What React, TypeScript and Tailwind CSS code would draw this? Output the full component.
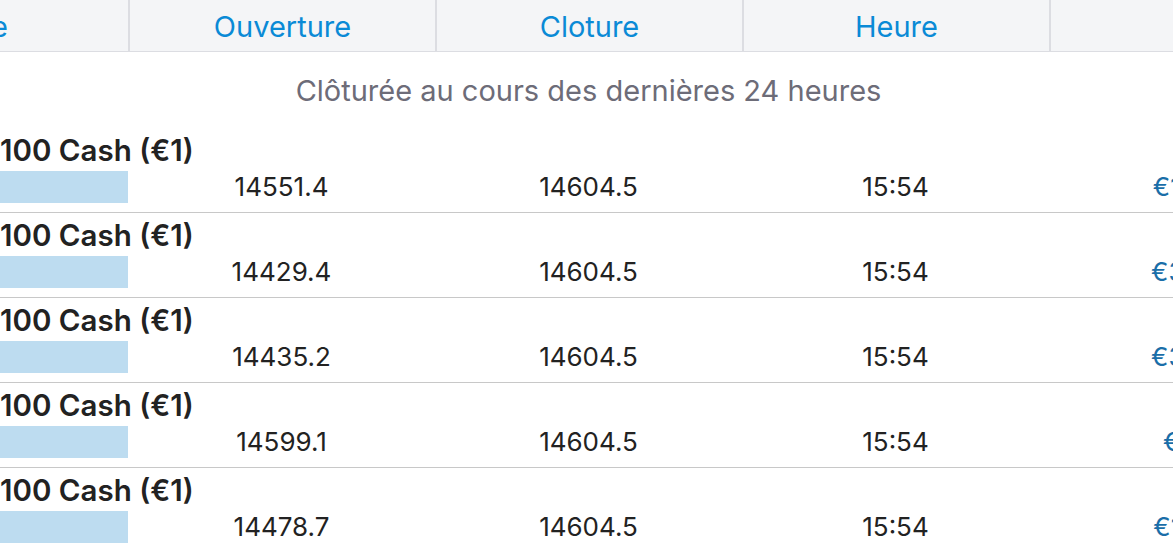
import React from "react";

const rows = [
  { open: "14551.4", close: "14604.5", time: "15:54", pl: "€106.20" },
  { open: "14429.4", close: "14604.5", time: "15:54", pl: "€350.70" },
  { open: "14435.2", close: "14604.5", time: "15:54", pl: "€338.70" },
  { open: "14599.1", close: "14604.5", time: "15:54", pl: "€11.40" },
  { open: "14478.7", close: "14604.5", time: "15:54", pl: "€125.80" },
];

const headers = ["Taille", "Ouverture", "Cloture", "Heure", "P/L"];

export default function App() {
  return (
    <div
      className="w-[1173px] h-[551px] overflow-hidden bg-white"
      style={{ fontFamily: "Inter, 'Noto Sans', sans-serif" }}
    >
      <div className="ml-[-179px] w-[1535px]">
        <div className="grid grid-cols-[307px_307px_307px_307px_307px] h-[52px] bg-[#f4f5f7] border-b border-[#dcdde2]">
          {headers.map((h, i) => (
            <div
              key={h}
              className={`flex items-center pt-[3px] text-[29px] text-[#0a8ad6] ${
                i > 0 ? "justify-center border-l-2 border-[#dcdde2]" : "justify-end pr-[120px]"
              }`}
            >
              {i === 4 ? "" : h}
            </div>
          ))}
        </div>
        <div className="h-[76px] flex items-center justify-center pt-[2px] text-[29px] text-[#6d6c78]">
          Clôturée au cours des dernières 24 heures
        </div>
        {rows.map((r, idx) => (
          <div key={idx} className="border-b border-[#c8c8c8] pt-[8px] pb-[9px]">
            <div className="flex h-[30px] items-center pb-[2px] text-[29.5px] font-semibold text-[#222222] leading-[30px]">
              <span className="w-[179px] shrink-0 text-right pr-[8px] whitespace-nowrap">US Tech</span>
              <span className="whitespace-nowrap">100 Cash (€1)</span>
            </div>
            <div className="mt-[5px] grid grid-cols-[307px_307px_307px_307px_307px] h-[32px] items-start text-[26px] leading-[31px] text-[#222222]">
              <div className="h-[32px] ml-[40px] bg-[#bddcf0]" />
              <div className="text-center">{r.open}</div>
              <div className="text-center">{r.close}</div>
              <div className="text-center">{r.time}</div>
              <div className="text-center text-[#1a6ea8]">{r.pl}</div>
            </div>
          </div>
        ))}
      </div>
    </div>
  );
}
